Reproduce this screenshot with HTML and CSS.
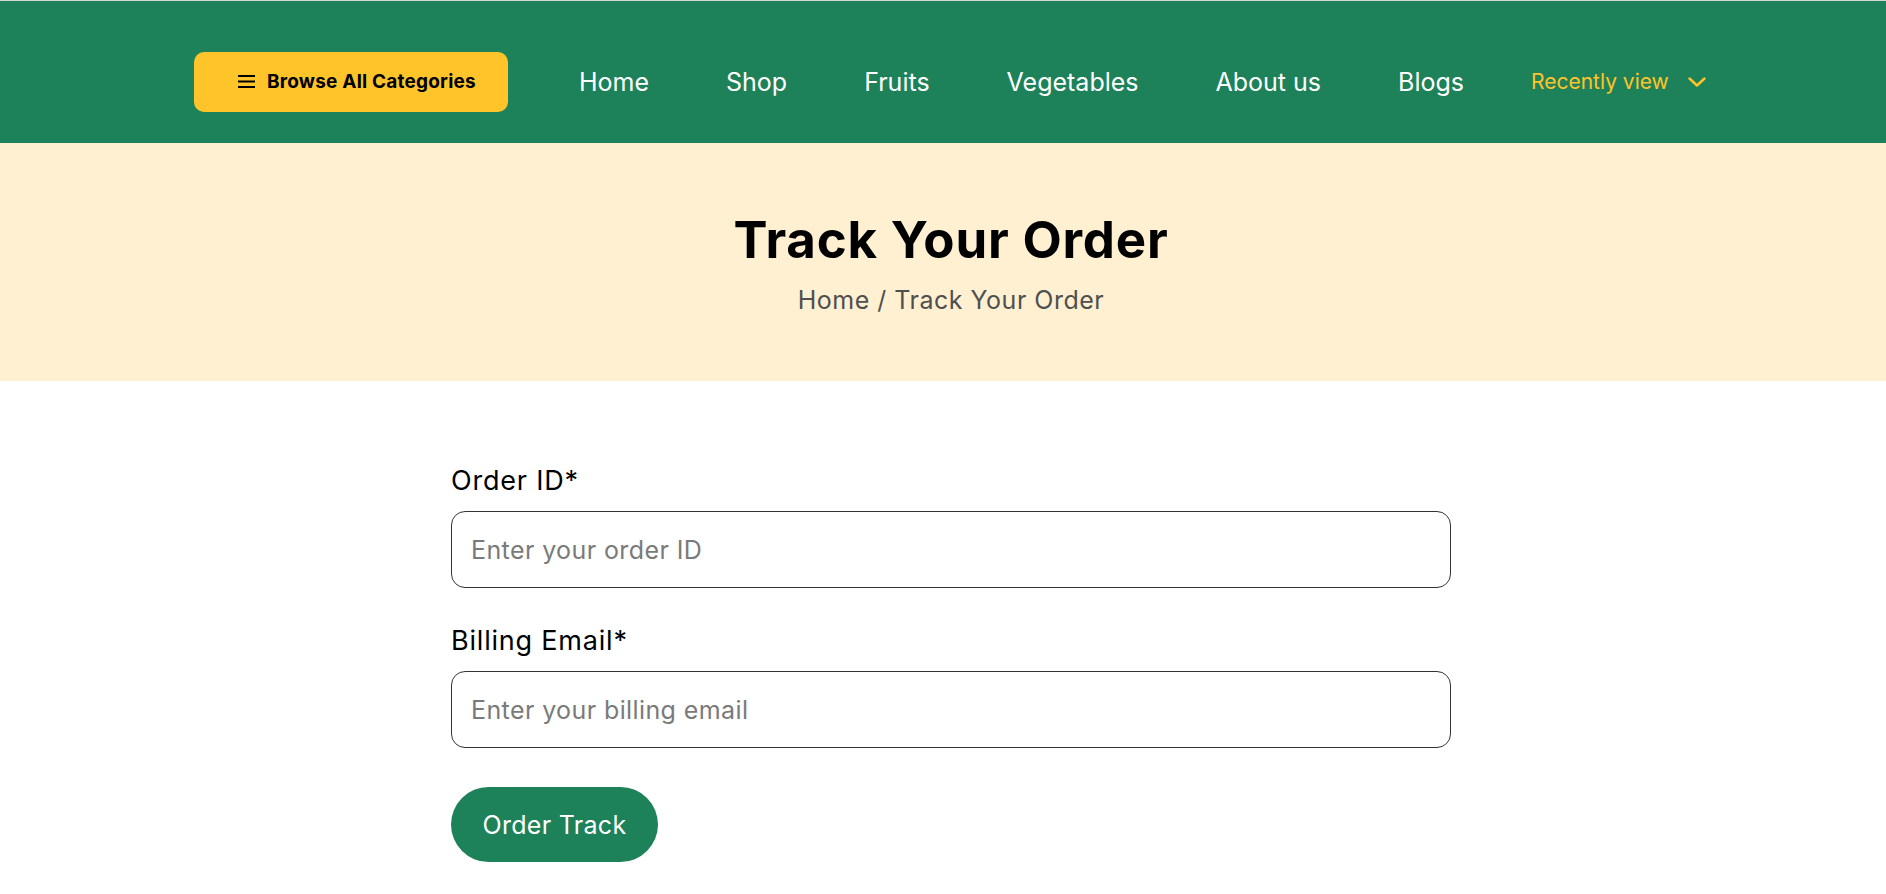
FILE: index.html
```html
<!DOCTYPE html>
<html lang="en">
<head>
<meta charset="utf-8">
<title>Track Your Order</title>
<link rel="stylesheet" href="styles.css">
</head>
<body>
<header class="site-header">
  <div class="header-inner">
    <button class="browse-btn" type="button">
      <svg class="burger" width="17" height="13" viewBox="0 0 17 13" aria-hidden="true">
        <rect x="0" y="0" width="17" height="2" fill="#000"/>
        <rect x="0" y="5.5" width="17" height="2" fill="#000"/>
        <rect x="0" y="11" width="17" height="2" fill="#000"/>
      </svg>
      <span>Browse All Categories</span>
    </button>
    <nav class="main-nav">
      <a href="#" class="nav-link">Home</a>
      <a href="#" class="nav-link">Shop</a>
      <a href="#" class="nav-link">Fruits</a>
      <a href="#" class="nav-link">Vegetables</a>
      <a href="#" class="nav-link">About us</a>
      <a href="#" class="nav-link">Blogs</a>
      <a href="#" class="nav-recent">Recently view
        <svg class="chev" width="18" height="10" viewBox="0 0 18 10" aria-hidden="true">
          <path d="M1.5 1.5 L9 8.5 L16.5 1.5" fill="none" stroke="#ffc42a" stroke-width="2.4" stroke-linecap="round" stroke-linejoin="round"/>
        </svg>
      </a>
    </nav>
  </div>
</header>

<section class="page-banner">
  <div class="banner-inner">
    <h1 class="banner-title">Track Your Order</h1>
    <p class="breadcrumb">Home / Track Your Order</p>
  </div>
</section>

<main class="track-section">
  <form class="track-form">
    <label class="field-label" for="oid">Order ID*</label>
    <input class="field-input" id="oid" type="text" placeholder="Enter your order ID">
    <label class="field-label" for="bemail">Billing Email*</label>
    <input class="field-input" id="bemail" type="email" placeholder="Enter your billing email">
    <button class="track-btn" type="button">Order Track</button>
  </form>
</main>
</body>
</html>
```

FILE: styles.css
```css
* { box-sizing: border-box; }

html, body {
  margin: 0;
  padding: 0;
  background: #ffffff;
  font-family: "Inter", "Noto Sans", sans-serif;
  color: #000;
}

.site-header {
  background: #1d8159;
  border-top: 1px solid #d6d6d6;
  height: 143px;
  padding: 19px 0 0 16px;
}

.header-inner {
  width: 1514px;
  height: 100%;
  margin: 0 auto;
  display: flex;
  align-items: center;
  white-space: nowrap;
}

.browse-btn {
  flex: none;
  width: 314px;
  height: 60px;
  background: #ffc42a;
  border: none;
  border-radius: 10px;
  display: flex;
  align-items: center;
  gap: 12px;
  padding: 0 0 0 44px;
  font-family: inherit;
  font-weight: 700;
  font-size: 19px;
  letter-spacing: 0.2px;
  color: #000;
  cursor: pointer;
}

.burger { display: block; flex: none; }

.main-nav {
  flex: none;
  display: flex;
  align-items: center;
  margin-left: 71px;
  gap: 77px;
}

.nav-link {
  flex: none;
  color: #ffffff;
  text-decoration: none;
  font-size: 25px;
  font-weight: 400;
}

.nav-recent {
  flex: none;
  color: #ffc42a;
  text-decoration: none;
  font-size: 21px;
  display: flex;
  align-items: center;
  gap: 19px;
  margin-left: -10px;
}

.chev { display: block; }

.page-banner {
  background: #fff0d1;
  height: 238px;
  padding-left: 16px;
}

.banner-inner {
  text-align: center;
  padding-top: 67px;
}

.banner-title {
  margin: 0;
  font-size: 51px;
  font-weight: 700;
  line-height: 60px;
  color: #000;
  letter-spacing: 0.8px;
}

.breadcrumb {
  margin: 15px 0 0;
  font-size: 25px;
  line-height: 30px;
  letter-spacing: 0.5px;
  color: #4f4f4f;
}

.track-section {
  padding: 82px 0 40px 16px;
}

.track-form {
  width: 1000px;
  margin: 0 auto;
  display: flex;
  flex-direction: column;
  align-items: flex-start;
}

.field-label {
  font-size: 27px;
  line-height: 36px;
  letter-spacing: 0.8px;
  color: #000;
  margin-bottom: 12px;
}

.field-input {
  width: 100%;
  height: 77px;
  border: 1px solid #333;
  border-radius: 14px;
  padding: 0 19px;
  font-family: inherit;
  font-size: 25px;
  letter-spacing: 0.4px;
  color: #333;
  margin-bottom: 35px;
  background: #fff;
  outline: none;
}

.field-input::placeholder { color: #7a7a7a; }

.track-btn {
  margin-top: 4px;
  width: 207px;
  height: 75px;
  border: none;
  border-radius: 38px;
  background: #1d8159;
  color: #fff;
  font-family: inherit;
  font-size: 25px;
  letter-spacing: 0.3px;
  cursor: pointer;
}
```
